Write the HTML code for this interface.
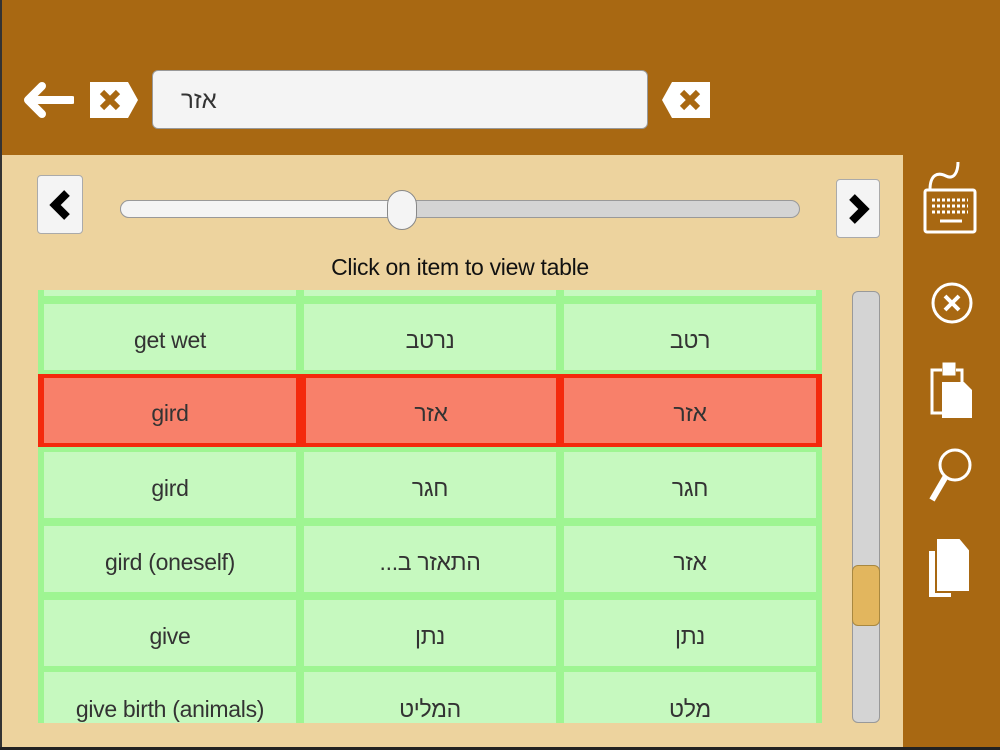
<!DOCTYPE html>
<html><head><meta charset="utf-8"><style>
*{margin:0;padding:0;box-sizing:border-box}
body{width:1000px;height:750px;overflow:hidden;position:relative;background:#EDD39E;font-family:"Liberation Sans","DejaVu Sans",sans-serif}
.abs{position:absolute}
#top{left:0;top:0;width:1000px;height:155px;background:#A86812}
#side{left:903px;top:155px;width:97px;height:595px;background:#A86812}
#edgeL{left:0;top:0;width:2px;height:750px;background:#333}
#edgeB{left:0;top:747px;width:1000px;height:3px;background:#222}
.search{left:152px;top:70px;width:496px;height:59px;background:#F4F4F4;border:1px solid #999;border-radius:6px;font-size:24px;color:#333;padding:16px 0 0 28px;font-family:"Liberation Sans","DejaVu Sans",sans-serif}
.btn{background:#F4F4F4;border:1px solid #aaa;border-radius:4px}
.cell{position:absolute;background:#C6F9BF;display:flex;align-items:center;justify-content:center;font-size:23px;color:#333;padding-top:6px;letter-spacing:-0.3px}
.red{background:#F8806A}
.caption{left:0;width:920px;top:254px;text-align:center;font-size:23px;color:#111;letter-spacing:-0.3px}
</style></head><body>
<div id="top" class="abs"></div>
<div id="side" class="abs"></div>
<div id="edgeL" class="abs"></div>

<svg class="abs" style="left:22px;top:80px" width="52" height="40" viewBox="0 0 52 40"><path d="M50 20H8M20 6L6 20L20 34" stroke="#fff" stroke-width="8" fill="none" stroke-linecap="round" stroke-linejoin="round"/></svg>
<svg class="abs" style="left:88px;top:80px" width="52" height="40" viewBox="0 0 52 40"><path d="M2 2H40L50 20L40 38H2Z" fill="#fff"/><path d="M14 12L30 28M30 12L14 28" stroke="#A86812" stroke-width="6"/></svg>
<div class="abs search">אזר</div>
<svg class="abs" style="left:660px;top:80px" width="52" height="40" viewBox="0 0 52 40"><path d="M50 2H12L2 20L12 38H50Z" fill="#fff"/><path d="M22 12L38 28M38 12L22 28" stroke="#A86812" stroke-width="6"/></svg>

<div class="abs btn" style="left:37px;top:175px;width:46px;height:59px"></div>
<svg class="abs" style="left:37px;top:175px" width="46" height="59" viewBox="0 0 46 59"><path d="M30 18L18 30L30 42" stroke="#000" stroke-width="8" fill="none"/></svg>
<div class="abs btn" style="left:836px;top:179px;width:44px;height:59px"></div>
<svg class="abs" style="left:836px;top:179px" width="44" height="59" viewBox="0 0 44 59"><path d="M16 18L28 30L16 42" stroke="#000" stroke-width="8" fill="none"/></svg>

<div class="abs" style="left:120px;top:200px;width:680px;height:18px;background:#D4D4D4;border:1px solid #999;border-radius:9px"></div>
<div class="abs" style="left:120px;top:200px;width:285px;height:18px;background:#F4F4F4;border:1px solid #999;border-right:none;border-radius:9px 0 0 9px"></div>
<div class="abs" style="left:387px;top:190px;width:30px;height:40px;background:#F4F4F4;border:1px solid #888;border-radius:15px"></div>

<div class="abs caption">Click on item to view table</div>

<div class="abs" style="left:38px;top:290px;width:784px;height:433px;background:#9EF592"></div>
<div class="cell" style="left:44px;top:290px;width:252px;height:6px;padding:0"></div>
<div class="cell" style="left:304px;top:290px;width:252px;height:6px;padding:0"></div>
<div class="cell" style="left:564px;top:290px;width:252px;height:6px;padding:0"></div>

<div class="cell" style="left:44px;top:304px;width:252px;height:66px">get wet</div>
<div class="cell" style="left:304px;top:304px;width:252px;height:66px">נרטב</div>
<div class="cell" style="left:564px;top:304px;width:252px;height:66px">רטב</div>

<div class="abs" style="left:38px;top:374px;width:784px;height:73px;background:#F42A0C"></div>
<div class="cell red" style="left:44px;top:378px;width:252px;height:65px">gird</div>
<div class="cell red" style="left:306px;top:378px;width:250px;height:65px">אזר</div>
<div class="cell red" style="left:564px;top:378px;width:252px;height:65px">אזר</div>

<div class="cell" style="left:44px;top:452px;width:252px;height:66px">gird</div>
<div class="cell" style="left:304px;top:452px;width:252px;height:66px">חגר</div>
<div class="cell" style="left:564px;top:452px;width:252px;height:66px">חגר</div>

<div class="cell" style="left:44px;top:526px;width:252px;height:66px">gird (oneself)</div>
<div class="cell" style="left:304px;top:526px;width:252px;height:66px" dir="rtl">התאזר ב...</div>
<div class="cell" style="left:564px;top:526px;width:252px;height:66px">אזר</div>

<div class="cell" style="left:44px;top:600px;width:252px;height:66px">give</div>
<div class="cell" style="left:304px;top:600px;width:252px;height:66px">נתן</div>
<div class="cell" style="left:564px;top:600px;width:252px;height:66px">נתן</div>

<div class="cell" style="left:44px;top:672px;width:252px;height:51px;align-items:flex-end;padding-bottom:0">give birth (animals)</div>
<div class="cell" style="left:304px;top:672px;width:252px;height:51px;align-items:flex-end;padding-bottom:0">המליט</div>
<div class="cell" style="left:564px;top:672px;width:252px;height:51px;align-items:flex-end;padding-bottom:0">מלט</div>

<div class="abs" style="left:852px;top:291px;width:28px;height:432px;background:#D4D4D4;border:1px solid #999;border-radius:6px"></div>
<div class="abs" style="left:852px;top:565px;width:28px;height:61px;background:#E2B65E;border:1px solid #A88840;border-radius:6px"></div>

<svg class="abs" style="left:918px;top:160px" width="70" height="450" viewBox="0 0 70 450">
<g fill="none" stroke="#fff" stroke-width="3">
<path d="M12 30C12 14 20 12 28 16C36 20 40 12 40 2"/>
<rect x="7" y="30" width="50" height="42" rx="2"/>
<path d="M14 40H50M14 46H50M14 52H50" stroke-dasharray="3 2"/>
<path d="M22 61H44"/>
<circle cx="34" cy="143" r="19"/>
<path d="M27 136L41 150M41 136L27 150" stroke-width="4"/>
<path d="M24 210H14V253H24M38 210H44V222"/>
<rect x="26" y="204" width="10" height="10" fill="#fff"/>
<circle cx="37" cy="305" r="15"/>
<path d="M28 316L14 340" stroke-width="6"/>
</g>
<path d="M24 222H46L54 230V258H24Z" fill="#fff"/>
<path d="M10 390H34V438H10Z" fill="#fff" stroke="#A86812" stroke-width="2"/>
<path d="M18 378H42L52 390V432H18Z" fill="#fff" stroke="#A86812" stroke-width="2"/>
</svg>
<div id="edgeB" class="abs"></div>
</body></html>
